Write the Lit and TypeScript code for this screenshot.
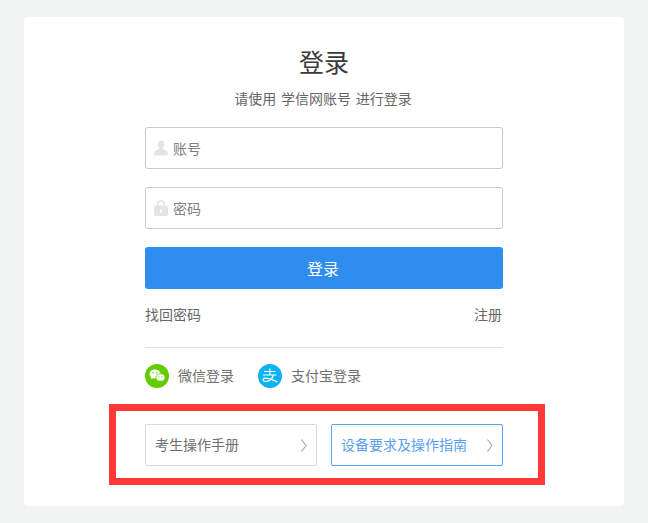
import { LitElement, html, css, svg } from "lit";
import { customElement } from "lit/decorators.js";

const chevron = svg`<svg class="chev" width="7" height="13" viewBox="0 0 7 13"><path d="M1.500 .5L6 6.500 1.500 12.500" fill="none" stroke="#aaa" stroke-width="1.200"/></svg>`;

@customElement("app-root")
export class AppRoot extends LitElement {
  static styles = css`
    :host { display: block; width: 648px; height: 523px; overflow: hidden; background: #f0f4f3; font-family: "Noto Sans CJK SC", "Liberation Sans", sans-serif; color: #666; }
    .page { padding: 17px 24px 0; box-sizing: border-box; }
    .card { width: 600px; height: 489px; box-sizing: border-box; background: #fff; border-radius: 4px; padding-top: 27px; display: flex; flex-direction: column; align-items: center; }
    .form { width: 358px; position: relative; }
    h1 { margin: 0; font-size: 25px; font-weight: 400; line-height: 34px; color: #3a3a3a; text-align: center; }
    .sub { margin-top: 10px; padding-right: 2px; font-size: 14px; line-height: 20px; text-align: center; color: #666; word-spacing: 1.500px; }
    .field { margin-top: 18px; height: 42px; box-sizing: border-box; border: 1px solid #ccc; border-radius: 3px; display: flex; align-items: center; padding-left: 8px; gap: 5px; font-size: 14px; color: #808080; }
    .sub + .field { margin-top: 19px; }
    .field svg { display: block; flex: none; }
    .btn { margin-top: 18px; height: 42px; background: #2e8ded; border-radius: 3px; color: #fff; font-size: 16px; display: flex; align-items: center; justify-content: center; padding-right: 2px; }
    .links { margin-top: 15px; padding-right: 1px; display: flex; justify-content: space-between; font-size: 14px; line-height: 20px; color: #666; }
    hr { margin: 23px 0 0; border: 0; border-top: 1px solid #e4e4e4; }
    .social { margin-top: 16px; display: flex; align-items: center; height: 24px; font-size: 14px; color: #707070; }
    .social svg { display: block; margin-right: 9px; flex: none; }
    .social span { margin-right: 24px; padding-bottom: 2px; }
    .guides { margin-top: 36px; display: flex; justify-content: space-between; }
    .guide { width: 172px; height: 42px; box-sizing: border-box; border: 1px solid #d9d9d9; border-radius: 2px; display: flex; align-items: center; justify-content: space-between; padding: 0 9px; font-size: 14px; color: #707070; }
    .guide span { padding-bottom: 2px; }
    .guide.active { border-color: #57a3f3; color: #5a9ff0; }
    .chev { display: block; flex: none; }
    .mark { position: absolute; left: -36px; top: 360px; width: 436px; height: 81px; box-sizing: border-box; border: 7px solid #ff3838; pointer-events: none; }
  `;

  render() {
    return html`<div class="page"><div class="card"><div class="form">
      <h1>登录</h1>
      <div class="sub">请使用 学信网账号 进行登录</div>
      <div class="field">
        <svg width="14" height="16" viewBox="0 0 15 16"><path fill="#e4e4e4" d="M7.500 0C5.300 0 4 1.600 4 3.800c0 1.700.7 3.300 1.700 4.200v1.200C3.500 10 .6 11 .3 13v3h14.400v-3c-.3-2-3.200-3-5.400-3.800V8c1-.9 1.700-2.500 1.700-4.200C11 1.600 9.700 0 7.500 0z"/></svg>
        账号
      </div>
      <div class="field">
        <svg width="14" height="16" viewBox="0 0 15 17"><path fill="#e4e4e4" fill-rule="evenodd" d="M3 6V4.500a4.500 4.500 0 0 1 9 0V6h1.500c.8 0 1.500.7 1.500 1.500V15c0 1.100-.9 2-2 2H2c-1.100 0-2-.9-2-2V7.500C0 6.700.7 6 1.500 6H3zm1.800 0h5.400V4.500a2.700 2.700 0 0 0-5.400 0V6zM6.500 10v3.500h2V10h-2z"/></svg>
        密码
      </div>
      <div class="btn">登录</div>
      <div class="links"><span>找回密码</span><span>注册</span></div>
      <hr />
      <div class="social">
        <svg width="24" height="24" viewBox="0 0 24 24"><circle cx="12" cy="12" r="12" fill="#62cc00"/><ellipse cx="10" cy="10" rx="5.500" ry="4.600" fill="#fff"/><path d="M6.500 13l-.7 2.200 2.500-1.300z" fill="#fff"/><ellipse cx="15.500" cy="13.500" rx="4.500" ry="3.700" fill="#fff" stroke="#62cc00" stroke-width=".8"/><circle cx="8.200" cy="8.800" r=".8" fill="#62cc00"/><circle cx="11.600" cy="8.800" r=".8" fill="#62cc00"/><circle cx="14" cy="12.800" r=".6" fill="#62cc00"/><circle cx="17" cy="12.800" r=".6" fill="#62cc00"/></svg>
        <span>微信登录</span>
        <svg width="24" height="24" viewBox="0 0 24 24"><circle cx="12" cy="12" r="12" fill="#0db2f0"/><path d="M6 7.500h11.500M11.800 4.500V11M5 11h13.500M15.500 11c-1 3.500-4 6.200-7.500 6.500-2.300.2-3.300-1-2.800-2.200.8-1.800 5-1.800 14.300 2.700" fill="none" stroke="#fff" stroke-width="1.200"/></svg>
        <span>支付宝登录</span>
      </div>
      <div class="guides">
        <div class="guide"><span>考生操作手册</span>${chevron}</div>
        <div class="guide active"><span>设备要求及操作指南</span>${chevron}</div>
      </div>
      <div class="mark"></div>
    </div></div></div>`;
  }
}
